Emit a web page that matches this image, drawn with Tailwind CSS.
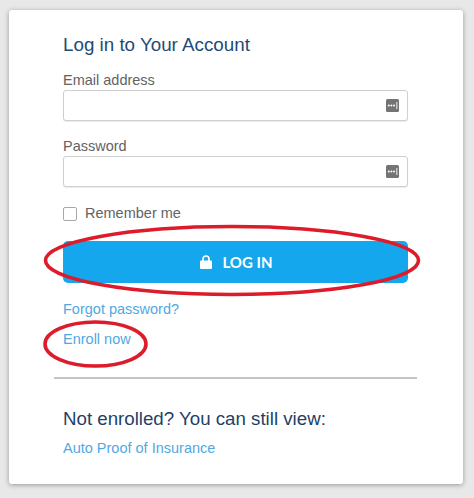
<!DOCTYPE html>
<html lang="en">
  <head>
    <meta charset="UTF-8" />
    <title>Log in</title>
    <script src="https://cdn.jsdelivr.net/npm/@tailwindcss/browser@4"></script>
  </head>
  <body class="relative w-[474px] h-[498px] overflow-hidden bg-[#e8e8e8] font-['Liberation_Sans']">
    <div class="pt-[10px] pl-[9px]">
      <div class="w-[454px] h-[474px] bg-white rounded-[3px] shadow-[0_1px_5px_rgba(0,0,0,0.35)]">
        <!-- Login form -->
        <div class="w-[345px] ml-[54px] pt-[24px]">
          <h1 class="text-[18.8px] leading-[22px] text-[#1f4a75]">Log in to Your Account</h1>
          <label class="block mt-[16px] text-[14.5px] leading-[17px] text-[#636363]">Email address</label>
          <div class="flex items-center justify-end h-[31px] mt-[1px] pr-[8px] bg-white border border-[#cfcfcf] rounded-[3px] shadow-[0_1px_1px_rgba(0,0,0,0.08)]">
            <svg width="13" height="13" viewBox="0 0 13 13">
              <rect width="13" height="13" rx="1.5" fill="#747474" />
              <circle cx="2.8" cy="6.5" r="1" fill="#fff" />
              <circle cx="5.4" cy="6.5" r="1" fill="#fff" />
              <circle cx="8" cy="6.5" r="1" fill="#fff" />
              <rect x="10.4" y="3" width="0.9" height="7" fill="#fff" />
            </svg>
          </div>
          <label class="block mt-[17px] text-[14.5px] leading-[17px] text-[#636363]">Password</label>
          <div class="flex items-center justify-end h-[31px] mt-[1px] pr-[8px] bg-white border border-[#cfcfcf] rounded-[3px] shadow-[0_1px_1px_rgba(0,0,0,0.08)]">
            <svg width="13" height="13" viewBox="0 0 13 13">
              <rect width="13" height="13" rx="1.5" fill="#747474" />
              <circle cx="2.8" cy="6.5" r="1" fill="#fff" />
              <circle cx="5.4" cy="6.5" r="1" fill="#fff" />
              <circle cx="8" cy="6.5" r="1" fill="#fff" />
              <rect x="10.4" y="3" width="0.9" height="7" fill="#fff" />
            </svg>
          </div>
          <div class="flex items-center gap-[8px] mt-[18px]">
            <span class="w-[14px] h-[14px] bg-white border border-[#a8a8a8] rounded-[2px]"></span>
            <span class="text-[14.5px] leading-[17px] text-[#636363]">Remember me</span>
          </div>
          <button class="flex items-center justify-center gap-[10px] w-full h-[42px] mt-[19px] pl-[2px] bg-[#14a7ee] rounded-[5px] text-white">
            <svg width="12" height="14" viewBox="0 0 12 14">
              <path d="M3 6V4a3 3 0 0 1 6 0v2" fill="none" stroke="#fff" stroke-width="1.7" />
              <rect y="5.5" width="12" height="8.5" rx="1" fill="#fff" />
            </svg>
            <span class="font-['Lato'] font-bold text-[15px] leading-[18px]">LOG IN</span>
          </button>
          <a class="block mt-[18px] text-[14.5px] leading-[17px] text-[#52a8e2]">Forgot password?</a>
          <a class="block mt-[13px] text-[14.5px] leading-[17px] text-[#52a8e2]">Enroll now</a>
        </div>
        <div class="w-[363px] h-[2px] ml-[45px] mt-[29px] bg-[#c4c4c4]"></div>
        <!-- Guest links -->
        <div class="ml-[54px] mt-[29px]">
          <h2 class="text-[18.7px] leading-[22px] text-[#1f3f66]">Not enrolled? You can still view:</h2>
          <a class="block mt-[10px] text-[14.5px] leading-[17px] text-[#52a8e2]">Auto Proof of Insurance</a>
        </div>
      </div>
    </div>
    <!-- Red marker circles drawn over the page -->
    <svg class="absolute top-0 left-0 pointer-events-none" width="474" height="498" viewBox="0 0 474 498">
      <ellipse cx="232" cy="260.5" rx="186.5" ry="34" fill="none" stroke="#dc1c2b" stroke-width="3.6" />
      <ellipse cx="95.5" cy="344" rx="50.5" ry="22" fill="none" stroke="#dc1c2b" stroke-width="3.6" />
    </svg>
  </body>
</html>
